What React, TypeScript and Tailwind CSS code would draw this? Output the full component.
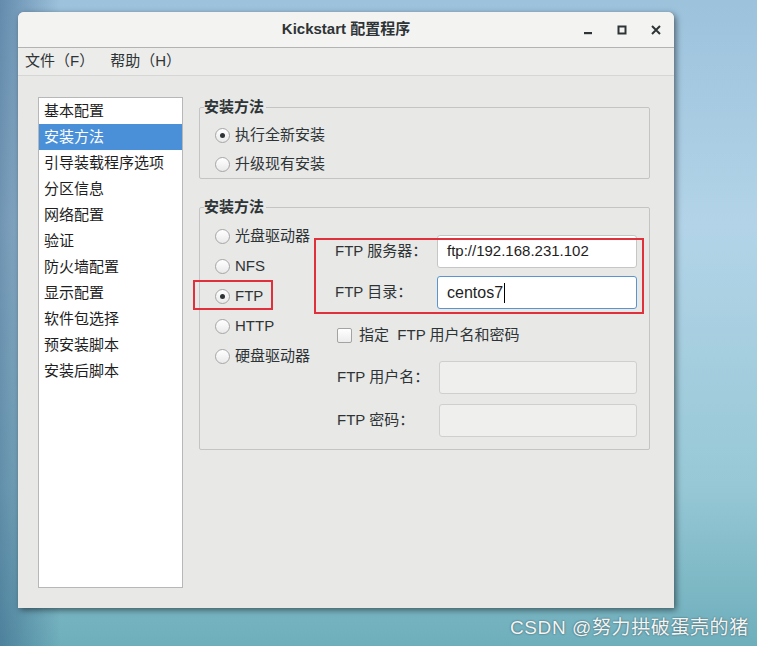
import { ReactNode } from 'react'

const FONT = { fontFamily: '"Liberation Sans", "Noto Sans CJK SC", sans-serif' }

const sections = [
  '基本配置',
  '安装方法',
  '引导装载程序选项',
  '分区信息',
  '网络配置',
  '验证',
  '防火墙配置',
  '显示配置',
  '软件包选择',
  '预安装脚本',
  '安装后脚本',
]

const sources = ['光盘驱动器', 'NFS', 'FTP', 'HTTP', '硬盘驱动器']

function Radio({ checked, label, rowClass }: { checked?: boolean; label: string; rowClass: string }) {
  return (
    <div className={`flex items-center ${rowClass}`}>
      <span className="flex h-[15px] w-[15px] items-center justify-center rounded-full border border-[#a6a6a6] bg-[linear-gradient(180deg,#ffffff,#e9e9e9)]">
        {checked && <span className="h-[5px] w-[5px] rounded-full bg-[#2e3436]" />}
      </span>
      <span className="ml-[5px] text-[15px] text-[#2e3436]">{label}</span>
    </div>
  )
}

function Group({ title, children, className = '' }: { title: string; children: ReactNode; className?: string }) {
  return (
    <fieldset className={`rounded-[2px] border border-[#c4c4c4] ${className}`}>
      <legend className="ml-[4px] h-[20px] pr-[2px] text-[15px] font-bold leading-[20px] text-[#2e3436]">{title}</legend>
      {children}
    </fieldset>
  )
}

function Field({ label, children }: { label: string; children: ReactNode }) {
  return (
    <div className="flex items-center">
      <span className="w-[102px] text-[15px] text-[#2e3436]">{label}</span>
      {children}
    </div>
  )
}

export default function App() {
  return (
    <div
      className="relative h-[646px] w-[757px] overflow-hidden bg-[linear-gradient(90deg,rgba(45,85,125,0.5)_0%,rgba(45,85,125,0)_8%),linear-gradient(180deg,#9cc2dc_0%,#b3d4e8_35%,#97c8d6_75%,#6eaebb_100%)] pl-[18px] pt-[12px]"
      style={FONT}
    >
      {/* window */}
      <div className="flex h-[596px] w-[656px] flex-col overflow-hidden rounded-t-[6px] bg-[#e8e8e7] shadow-[2px_2px_6px_rgba(0,0,0,0.5)]">
        {/* title bar */}
        <div className="grid h-[36px] grid-cols-[1fr_auto_1fr] items-center border-b border-[#b3b3b3] bg-[#f3f3f2]">
          <div />
          <div className="text-[15px] font-bold text-[#2e3436]">Kickstart 配置程序</div>
          <div className="flex justify-end pr-[1px]">
            <div className="flex h-[34px] w-[34px] items-center justify-center">
              <svg width="10" height="10" viewBox="0 0 10 10">
                <rect x="1" y="7" width="8" height="2.2" fill="#2e3436" />
              </svg>
            </div>
            <div className="flex h-[34px] w-[34px] items-center justify-center">
              <svg width="10" height="10" viewBox="0 0 10 10">
                <rect x="1.5" y="1.5" width="7" height="7" fill="none" stroke="#2e3436" strokeWidth="2" />
              </svg>
            </div>
            <div className="flex h-[34px] w-[34px] items-center justify-center">
              <svg width="10" height="10" viewBox="0 0 10 10">
                <path d="M1 1L9 9M9 1L1 9" stroke="#2e3436" strokeWidth="2" />
              </svg>
            </div>
          </div>
        </div>

        {/* menu bar */}
        <div className="flex h-[28px] items-center gap-[16px] border-b border-[#d6d6d5] bg-[#ececeb] pl-[7px] text-[15px] text-[#2e3436]">
          <span>文件（F）</span>
          <span>帮助（H）</span>
        </div>

        {/* body */}
        <div className="flex flex-1 px-[20px] pb-[20px] pt-[21px]">
          <div className="w-[145px] border border-[#b7b7b7] bg-white">
            {sections.map((s, i) => (
              <div
                key={s}
                className={`flex h-[26px] items-center pl-[5px] text-[15px] ${
                  i === 1 ? 'bg-[#4a90d9] text-white' : 'text-[#1e1e1e]'
                }`}
              >
                {s}
              </div>
            ))}
          </div>

          <div className="ml-[16px] w-[451px]">
            <Group title="安装方法">
              <div className="pl-[15px] pt-[3px]">
                <Radio checked label="执行全新安装" rowClass="h-[30px]" />
                <Radio label="升级现有安装" rowClass="h-[28px]" />
              </div>
            </Group>

            <Group title="安装方法" className="mt-[18px]">
              <div className="flex">
                <div className="w-[135px] pl-[15px] pt-[4px]">
                  {sources.map((s) => (
                    <Radio key={s} checked={s === 'FTP'} label={s} rowClass="h-[30px]" />
                  ))}
                </div>
                <div className="flex flex-col pb-[12px] pt-[18px]">
                  <Field label="FTP 服务器：">
                    <div className="flex h-[33px] w-[200px] items-center rounded-[3px] border border-[#c6c6c6] bg-white pl-[9px] text-[15px] text-[#1e1e1e]">
                      ftp://192.168.231.102
                    </div>
                  </Field>
                  <div className="mt-[8px]">
                    <Field label="FTP 目录：">
                      <div className="flex h-[33px] w-[200px] items-center rounded-[3px] border border-[#5b94cf] bg-white pl-[9px] text-[16px] text-[#1e1e1e]">
                        centos7
                        <span className="ml-[1px] h-[20px] w-[1px] bg-black" />
                      </div>
                    </Field>
                  </div>
                  <div className="mt-[10px] flex h-[32px] items-center pl-[2px]">
                    <span className="h-[15px] w-[15px] rounded-[2px] border border-[#a3a3a3] bg-[linear-gradient(180deg,#ffffff,#ececec)]" />
                    <span className="ml-[7px] text-[15px] text-[#2e3436]">指定&nbsp;&nbsp;FTP 用户名和密码</span>
                  </div>
                  <div className="mt-[10px] pl-[2px]">
                    <Field label="FTP 用户名：">
                      <div className="h-[33px] w-[198px] rounded-[3px] border border-[#cfcfcf] bg-[#efefee]" />
                    </Field>
                  </div>
                  <div className="mt-[10px] pl-[2px]">
                    <Field label="FTP 密码：">
                      <div className="h-[33px] w-[198px] rounded-[3px] border border-[#cfcfcf] bg-[#efefee]" />
                    </Field>
                  </div>
                </div>
              </div>
            </Group>
          </div>
        </div>
      </div>

      {/* red annotation boxes */}
      <div className="absolute left-[314px] top-[238px] h-[76px] w-[330px] border-2 border-[#e0303b]" />
      <div className="absolute left-[193px] top-[280px] h-[30px] w-[80px] border-2 border-[#e0303b]" />

      {/* watermark */}
      <div className="absolute left-[510px] top-[614px] text-[19px] tracking-[0.6px] text-[#f4f4f4] [text-shadow:0_0_2px_rgba(0,0,0,0.55)]">
        CSDN @努力拱破蛋壳的猪
      </div>
    </div>
  )
}
